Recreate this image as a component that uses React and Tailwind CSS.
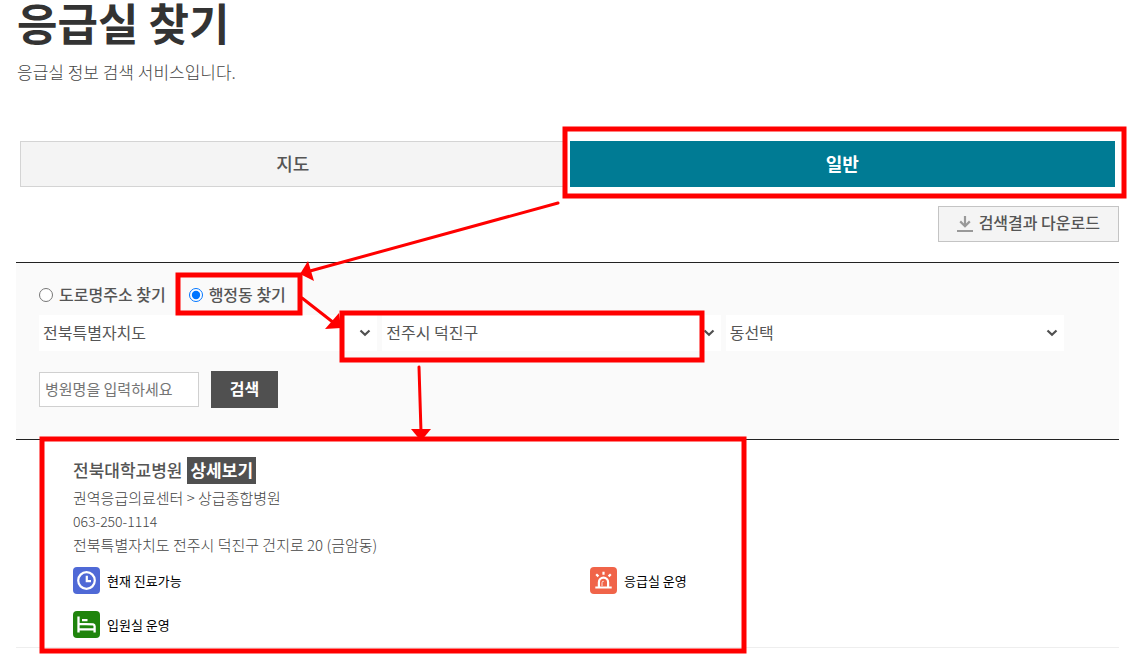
import React, { useState } from 'react';

const regions = [
  { id: 'sido', label: '시도', options: ['전북특별자치도'] },
  { id: 'gugun', label: '시군구', options: ['전주시 덕진구'] },
  { id: 'dong', label: '동', options: ['동선택'] },
];

const ClockIcon = () => (
  <svg viewBox="0 0 27 27" className="size-[27px] shrink-0" aria-hidden="true">
    <rect width="27" height="27" rx="4" fill="#4f69d6" />
    <circle cx="13.5" cy="13.5" r="8.3" fill="none" stroke="#fff" strokeWidth="2.2" />
    <path d="M13.8 8.8v5.4h4.2" fill="none" stroke="#fff" strokeWidth="2.2" />
  </svg>
);

const SirenIcon = () => (
  <svg viewBox="0 0 27 27" className="size-[27px] shrink-0" aria-hidden="true">
    <rect width="27" height="27" rx="4" fill="#f06449" />
    <path
      d="M5.3 20.5h16.4M8.9 20v-4.8a4.6 4.6 0 0 1 9.2 0V20M13.5 4.8v3M6.2 7.2l2.2 2.2M20.8 7.2l-2.2 2.2"
      fill="none"
      stroke="#fff"
      strokeWidth="2.2"
    />
    <path d="M12 19v-3.2a1.5 1.5 0 0 1 1.8-1.5" fill="none" stroke="#fff" strokeWidth="0.8" />
  </svg>
);

const BedIcon = () => (
  <svg viewBox="0 0 27 27" className="size-[27px] shrink-0" aria-hidden="true">
    <rect width="27" height="27" rx="4" fill="#1f840c" />
    <path
      d="M5.5 5.5v16M5.5 18.3h16M21.6 21.5v-6.2a2 2 0 0 0-1.5-1.9L5.5 12.8M9 9.2h5.5"
      fill="none"
      stroke="#fff"
      strokeWidth="2.3"
    />
  </svg>
);

const DownloadIcon = () => (
  <svg viewBox="0 0 16 16" className="size-4 shrink-0" aria-hidden="true">
    <path d="M8 0v10M3.2 5.4L8 10.2l4.8-4.8" fill="none" stroke="#999" strokeWidth="2.2" />
    <path d="M0 15h16" stroke="#999" strokeWidth="2" />
  </svg>
);

const RegionSelect = ({ id, label, options }) => (
  <div className="relative flex-1">
    <select id={id} aria-label={label} className="block h-9 w-full appearance-none bg-white px-1 pb-[2px] text-base text-[#555]">
      {options.map((o) => (
        <option key={o}>{o}</option>
      ))}
    </select>
    <svg viewBox="0 0 12 8" className="pointer-events-none absolute top-[14px] right-[6px] h-2 w-3" aria-hidden="true">
      <path d="M1.5 1.5L6 5.8l4.5-4.3" fill="none" stroke="#505050" strokeWidth="2.2" />
    </svg>
  </div>
);

const Status = ({ icon, text }) => (
  <li className="flex items-center gap-[7px] text-[13px] text-black">
    {icon}
    <span>{text}</span>
  </li>
);

// red guide boxes and arrows drawn over the page
const Guide = () => (
  <svg className="pointer-events-none absolute top-0 left-0" width="1134" height="655" aria-hidden="true">
    <g fill="none" stroke="#f00" strokeWidth="5">
      <rect x="565" y="129" width="559" height="67" />
      <rect x="178" y="275" width="122" height="38" />
      <rect x="342" y="313" width="360" height="47" />
      <rect x="42" y="439" width="702" height="212" />
    </g>
    <g stroke="#f00" strokeWidth="3" strokeLinecap="round">
      <path d="M558 203L310 271" />
      <path d="M302 298L334 323" />
      <path d="M419 367L421 432" />
    </g>
    <g fill="#f00">
      <path d="M300 274L308 261L314 281z" />
      <path d="M341 328L339 313L325 329z" />
      <path d="M421 441L411 429H431z" />
    </g>
  </svg>
);

const App = () => {
  const [mode, setMode] = useState('dong');

  return (
    <div className="relative min-h-screen bg-white pr-[15px] pl-4 font-['Noto_Sans_CJK_KR',sans-serif] text-[#555]">
      <header className="pl-px">
        <h1 className="text-[44px] leading-[44px] font-bold text-[#333]">응급실 찾기</h1>
        <p className="mt-4 text-[17px] leading-6 font-light text-[#444]">응급실 정보 검색 서비스입니다.</p>
      </header>

      <nav className="mx-1 mt-[57px] flex gap-1 text-lg">
        <button type="button" className="h-[46px] flex-1 border border-[#d4d4d4] bg-[#f4f4f4] pb-[2px] font-medium">
          지도
        </button>
        <button type="button" className="h-[46px] flex-1 border border-[#007b94] bg-[#007b94] pb-[2px] font-bold text-white">
          일반
        </button>
      </nav>

      <div className="mt-[19px] flex justify-end">
        <button type="button" className="flex h-9 items-center gap-[6px] border border-[#c4c4c4] bg-[#f4f4f4] px-[18px] font-medium">
          <DownloadIcon />
          <span className="pb-1">검색결과 다운로드</span>
        </button>
      </div>

      <form
        className="mt-5 border-y border-[#222] bg-[#fafafa] pt-5 pr-[55px] pb-[31px] pl-[23px]"
        onSubmit={(e) => e.preventDefault()}
      >
        <div className="flex gap-[23px] leading-6 font-medium">
          <label className="flex items-center gap-[6px]">
            <input type="radio" name="mode" className="size-[14px]" checked={mode === 'road'} onChange={() => setMode('road')} />
            <span className="pb-[2px] leading-[22px]">도로명주소 찾기</span>
          </label>
          <label className="flex items-center gap-[6px]">
            <input type="radio" name="mode" className="size-[14px]" checked={mode === 'dong'} onChange={() => setMode('dong')} />
            <span className="pb-[2px] leading-[22px]">행정동 찾기</span>
          </label>
        </div>

        <div className="mt-2 flex gap-[5px]">
          {regions.map((r) => (
            <RegionSelect key={r.id} {...r} />
          ))}
        </div>

        <div className="mt-5 flex items-center gap-3">
          <input
            type="text"
            aria-label="병원명"
            placeholder="병원명을 입력하세요"
            className="h-[35px] w-40 border border-[#d0d0d0] bg-white px-[5px] pb-[2px] text-[15px] placeholder:text-[#757575]"
          />
          <button type="submit" className="h-[37px] w-[67px] bg-[#505050] pb-1 font-bold text-white">
            검색
          </button>
        </div>
      </form>

      <section className="border-b border-[#eee] pt-[17px] pr-3 pb-[9px] pl-[57px]">
        <div className="flex items-center gap-[5px] text-[17px]">
          <h2 className="pb-[2px] leading-[25px] font-medium">전북대학교병원</h2>
          <a href="#detail" className="bg-[#505050] px-[3px] pb-[2px] leading-[25px] font-bold text-white">상세보기</a>
        </div>
        <div className="mt-[2px] text-[15px] leading-[23px] font-light text-[#444]">
          <p>권역응급의료센터 &gt; 상급종합병원</p>
          <p className="text-sm leading-6">063-250-1114</p>
          <p>전북특별자치도 전주시 덕진구 건지로 20 (금암동)</p>
        </div>
        <ul className="mt-[11px] grid grid-cols-2 gap-y-[17px]">
          <Status icon={<ClockIcon />} text="현재 진료가능" />
          <Status icon={<SirenIcon />} text="응급실 운영" />
          <Status icon={<BedIcon />} text="입원실 운영" />
        </ul>
      </section>

      <Guide />
    </div>
  );
};

export default App;
